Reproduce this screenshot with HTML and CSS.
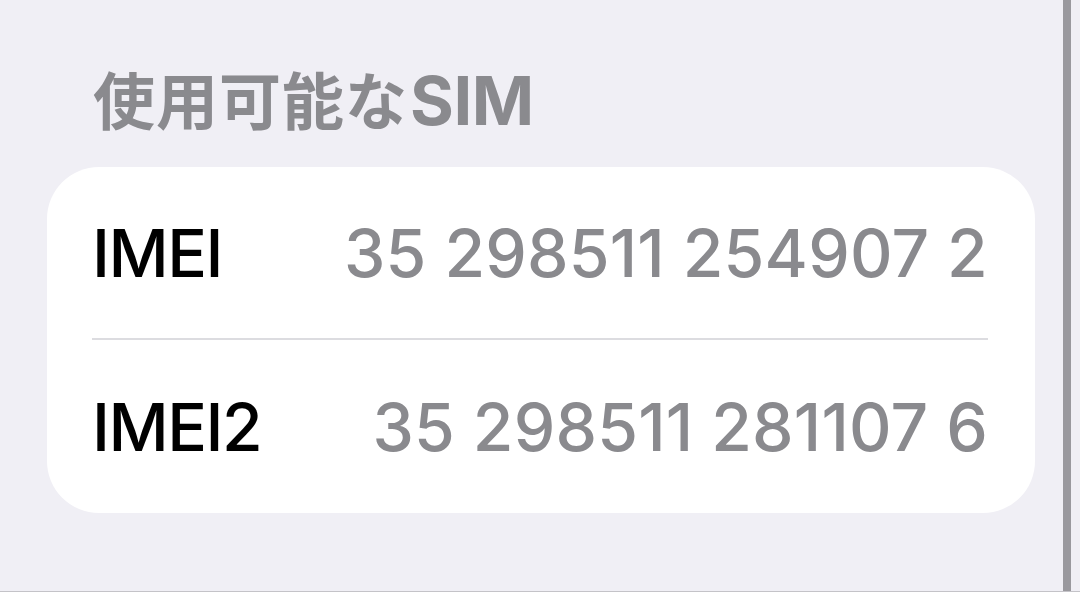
FILE: index.html
```html
<!DOCTYPE html>
<html lang="ja">
<head>
  <meta charset="UTF-8">
  <title>情報</title>
  <link rel="stylesheet" href="styles.css">
</head>
<body>
  <div class="screen">
    <main class="content">
      <h2 class="section-title">使用可能な<span class="latin">SIM</span></h2>
      <div class="group">
        <div class="row">
          <span class="label">IMEI</span>
          <span class="value">35 298511 254907 2</span>
        </div>
        <div class="row">
          <span class="label">IMEI2</span>
          <span class="value">35 298511 281107 6</span>
        </div>
      </div>
    </main>
    <div class="scrollbar"></div>
    <div class="edge"></div>
  </div>
</body>
</html>
```

FILE: styles.css
```css
* { box-sizing: border-box; }
body { margin: 0; background: #f0eff5; font-family: Inter, "Noto Sans CJK JP", sans-serif; overflow: hidden; }
.screen { display: flex; height: 592px; border-bottom: 1px solid #c4c3c8; }
.content { width: 1063px; padding: 0 28px 0 47px; flex: none; }
.section-title { margin: 58px 0 0 46px; font-size: 62px; font-weight: 700; color: #8a8a8e; line-height: 86px; letter-spacing: 1px; }
.section-title .latin { font-size: 67px; margin-left: 2px; letter-spacing: -0.5px; }
.group { margin-top: 21px; background: #fff; border-radius: 52px; padding: 0 47px 0 45px; }
.row { display: flex; justify-content: space-between; align-items: center; height: 171px; font-size: 66px; font-weight: 500; }
.row + .row { border-top: 2px solid #dcdce0; height: 175px; }
.label { color: #000; letter-spacing: -1.5px; }
.value { color: #8a8a8e; letter-spacing: 0.2px; }
.scrollbar { width: 8px; background: #9a999e; flex: none; }
.edge { flex: 1; background: #f0eff5; }
```
